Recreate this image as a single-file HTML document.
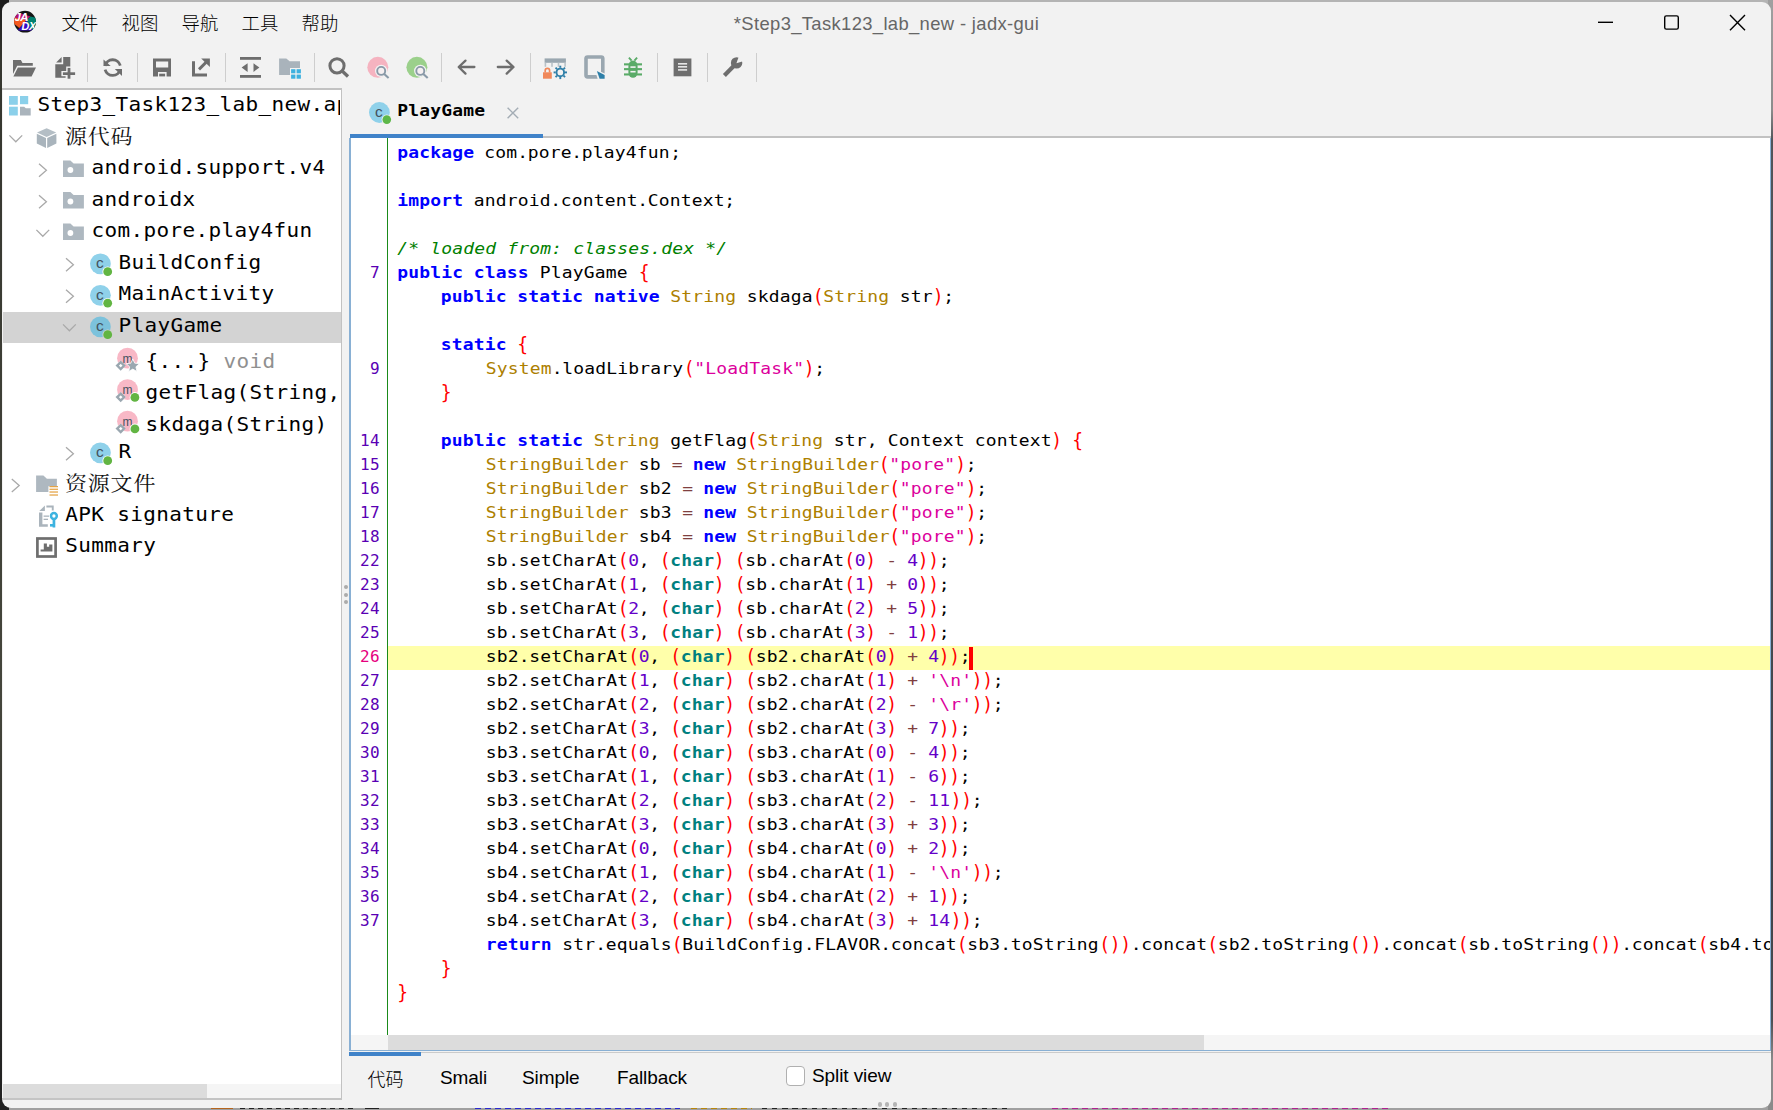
<!DOCTYPE html><html lang="zh"><head><meta charset="utf-8"><title>*Step3_Task123_lab_new - jadx-gui</title><style>
*{box-sizing:border-box;margin:0;padding:0}
html,body{width:1773px;height:1110px;overflow:hidden}
body{position:relative;background:#b9b9b9;font-family:"Liberation Sans","Noto Sans CJK SC",sans-serif;color:#000}
.abs{position:absolute}
#desk-l{left:0;top:0;width:3px;height:1110px;background:linear-gradient(#1d1d1d 0,#35362f 60px,#3b3c34 300px,#45463c 700px,#2a2a28 1000px,#202020 100%)}
#desk-t{left:0;top:0;width:1773px;height:4px;background:#b4b4b4}
#desk-b{left:0;top:1100px;width:1773px;height:10px;background:#a0a0a0}
.frag{top:1108px;height:1.3px}
#desk-r{left:1768px;top:0;width:5px;height:1110px;background:linear-gradient(#a0a0a0 0,#8c8c8c 110px,#50555a 140px,#3e4349 900px,#4a4f54 1020px,#8a8a8a 1060px,#8a8a8a 100%)}
#win{left:2px;top:2px;width:1769px;height:1105.9px;background:#f2f2f2;border-radius:9px;overflow:hidden}
.menu{top:11px;font-weight:300;font-size:18.4px;line-height:22px;height:22px;white-space:nowrap;font-family:"Noto Sans CJK SC",sans-serif;color:#000}
#title{left:0;top:12px;width:1773px;text-align:center;font-size:18.4px;letter-spacing:0.36px;line-height:24px;color:#666;white-space:nowrap}
.sep{width:1.2px;top:52.5px;height:29.5px;background:#cecece}
.mono{font-family:"DejaVu Sans Mono","Liberation Mono",monospace}
#tree{left:3px;top:89px;width:337.5px;height:1009px;background:#fff;overflow:hidden}
.trow{left:0;width:400px;height:31.5px;white-space:nowrap;font-size:21px;letter-spacing:0.357px;line-height:31.5px;transform:scaleY(0.9);transform-origin:0 22px}
.trow .cjk{display:inline-block;font-family:"Noto Serif CJK SC",serif;font-size:22px;letter-spacing:0.8px;color:#111;transform:scaleY(1.035);transform-origin:0 23px}
#code{left:351px;top:138px;width:1419px;height:897px;background:#fff;overflow:hidden}
.cl{left:46.24px;height:24px;line-height:24px;font-size:18px;letter-spacing:0.163px;white-space:pre;color:#000;transform:scaleY(0.91);transform-origin:0 18px}
.cl span{display:inline-block;white-space:pre;overflow:visible;height:24px;vertical-align:top}
.ln{left:0;width:29px;text-align:right;height:24px;line-height:24px;font-size:16px;letter-spacing:0.37px;color:#5a00b4}
.cl .s{transform:scaleY(1.2);transform-origin:50% 12.6px}
.k{color:#0000ff;font-weight:bold}
.t{color:#ad8000}
.s{color:#ff0000}
.o{color:#804040}
.n{color:#6400c8}
.q{color:#dc009c}
.d{color:#008080;font-weight:bold}
.c{color:#008000;font-style:italic}
.btab{top:1065px;font-size:19px;letter-spacing:-0.1px;line-height:26px;white-space:nowrap;color:#000}
</style></head><body>
<div id="desk-t" class="abs"></div><div id="desk-b" class="abs"></div><div id="desk-r" class="abs"></div><div id="desk-l" class="abs"></div>
<div class="abs" style="left:0;top:0;width:9px;height:9px;background:#1d1d1d"></div><div class="abs" style="left:0;top:1100px;width:9px;height:10px;background:#222"></div>
<div class="abs frag" style="left:211px;width:22px;background:repeating-linear-gradient(90deg,#b5651d 0,#b5651d 22px,transparent 22px,transparent 30px)"></div>
<div class="abs frag" style="left:240px;width:115px;background:repeating-linear-gradient(90deg,#222 0,#222 5.5px,transparent 5.5px,transparent 9px)"></div>
<div class="abs frag" style="left:365px;width:20px;background:repeating-linear-gradient(90deg,#222 0,#222 14px,transparent 14px,transparent 20px)"></div>
<div class="abs frag" style="left:475px;width:205px;background:repeating-linear-gradient(90deg,#2a2ad0 0,#2a2ad0 6px,transparent 6px,transparent 10px)"></div>
<div class="abs frag" style="left:691px;width:61px;background:repeating-linear-gradient(90deg,#b8860b 0,#b8860b 6px,transparent 6px,transparent 10px)"></div>
<div class="abs frag" style="left:762px;width:248px;background:repeating-linear-gradient(90deg,#222 0,#222 5.5px,transparent 5.5px,transparent 10px)"></div>
<div class="abs frag" style="left:1052px;width:338px;background:repeating-linear-gradient(90deg,#b0208f 0,#b0208f 6px,transparent 6px,transparent 10px)"></div>
<div id="win" class="abs"></div>
<svg class="abs" style="left:12px;top:9px" width="26" height="26" viewBox="12 9 26 26">
<defs><clipPath id="lc"><circle cx="25" cy="21.7" r="10.9"/></clipPath></defs>
<g clip-path="url(#lc)"><rect x="12" y="9" width="26" height="26" fill="#151515"/>
<polygon points="16.5,12 30.4,16.6 26.5,20.2 13,19.4" fill="#b5126f"/>
<polygon points="13,23 13,17.2 26.5,20.2 19.4,28" fill="#f4581f"/>
<polygon points="26.5,20.2 33,30.6 17.5,30.6" fill="#3408c8"/>
<polygon points="30.4,16.6 37,18 37,29 31.6,29.4 26.5,20.2" fill="#00816e"/>
<text x="14.4" y="21.4" font-family="Liberation Sans,sans-serif" font-weight="bold" font-style="italic" font-size="11.3" letter-spacing="-0.3" fill="#fff">JA</text>
<text x="21.4" y="29.8" font-family="Liberation Sans,sans-serif" font-weight="bold" font-style="italic" font-size="10.8" letter-spacing="-0.3" fill="#fff">DX</text>
</g></svg>
<div class="abs menu" style="left:61.5px">文件</div>
<div class="abs menu" style="left:121.5px">视图</div>
<div class="abs menu" style="left:181.5px">导航</div>
<div class="abs menu" style="left:241.5px">工具</div>
<div class="abs menu" style="left:301.5px">帮助</div>
<div id="title" class="abs">*Step3_Task123_lab_new - jadx-gui</div>
<svg class="abs" style="left:0;top:0" width="1773" height="90" viewBox="0 0 1773 90"><polygon points="13,59.9 20.9,59.9 22.5,63 32.8,63 32.8,65.8 17.2,65.8 13,74" fill="#6e6e6e"/><polygon points="17.9,67.5 36,67.5 31.6,76.4 13.4,76.4" fill="#6e6e6e"/><polygon points="56.1,62.4 61.6,57 61.6,62.4" fill="#6e6e6e"/><polygon points="63.2,57 70.3,57 70.3,66.6 66.2,66.6 66.2,71 61.4,71 61.4,76.2 65.6,76.2 65.6,77.8 55.3,77.8 55.3,64.3 63.2,64.3" fill="#6e6e6e"/><rect x="62.9" y="72.3" width="12.2" height="2.7" fill="#6e6e6e"/><rect x="67.6" y="67.9" width="2.8" height="10.8" fill="#6e6e6e"/><path d="M105.1,66 A7.8,7.8 0 0 1 120.3,65.6" fill="none" stroke="#6e6e6e" stroke-width="2.8"/><path d="M120.3,69.2 A7.8,7.8 0 0 1 105.1,69.6" fill="none" stroke="#6e6e6e" stroke-width="2.8"/><polygon points="103.5,59.6 110.7,66 103.5,66" fill="#6e6e6e"/><polygon points="122,69.1 122,75.9 114.8,69.1" fill="#6e6e6e"/><path fill-rule="evenodd" fill="#6e6e6e" d="M153,58.4h18v18h-18z M156,61.6v5.9h12.2v-5.9z M158,71.9v4.5h8.6v-4.5z"/><rect x="159.2" y="73.7" width="5.9" height="2.7" fill="#6e6e6e"/><path d="M193.5,61.2V75.1H207" fill="none" stroke="#6e6e6e" stroke-width="3"/><path d="M199,69.4L206.5,61.9" fill="none" stroke="#6e6e6e" stroke-width="2.9"/><polygon points="201.2,58.4 209.9,58.4 209.9,67" fill="#6e6e6e"/><rect x="240" y="57" width="21" height="2.8" fill="#6e6e6e"/><rect x="240" y="75" width="21" height="2.8" fill="#6e6e6e"/><polygon points="241.6,67.5 247.6,63.3 247.6,71.9" fill="#6e6e6e"/><polygon points="259.4,67.5 253.5,63.3 253.5,71.9" fill="#6e6e6e"/><polygon points="279.1,58.4 286.3,58.4 289.6,61.3 300,61.3 300,68 290,68 290,75 279.1,75" fill="#a9b3bb"/><rect x="291.1" y="69.2" width="4.3" height="4.1" fill="#3eb1df"/><rect x="296.6" y="69.2" width="4.3" height="4.1" fill="#3eb1df"/><rect x="291.1" y="74.6" width="4.3" height="4.1" fill="#3eb1df"/><rect x="296.6" y="74.6" width="4.3" height="4.1" fill="#3eb1df"/><circle cx="337" cy="65.8" r="7.1" fill="none" stroke="#6e6e6e" stroke-width="3"/><path d="M342.2,71 L348,76.5" stroke="#6e6e6e" stroke-width="3.3" fill="none"/><circle cx="377.8" cy="67.3" r="10.5" fill="#f5b3c0"/><path d="M384.2,73.9 L388.8,78.2" stroke="#f2f2f2" stroke-width="4.6" fill="none"/><circle cx="381.2" cy="70.9" r="6.2" fill="#f2f2f2"/><circle cx="381.2" cy="70.9" r="4" fill="#f6f0f1" stroke="#8a9aa8" stroke-width="1.9"/><path d="M384.2,73.9 L388.59999999999997,78.0" stroke="#8a9aa8" stroke-width="2.1" fill="none"/><circle cx="416.9" cy="67.3" r="10.5" fill="#9bd08b"/><path d="M423.29999999999995,73.9 L427.9,78.2" stroke="#f2f2f2" stroke-width="4.6" fill="none"/><circle cx="420.29999999999995" cy="70.9" r="6.2" fill="#f2f2f2"/><circle cx="420.29999999999995" cy="70.9" r="4" fill="#f6f0f1" stroke="#8a9aa8" stroke-width="1.9"/><path d="M423.29999999999995,73.9 L427.69999999999993,78.0" stroke="#8a9aa8" stroke-width="2.1" fill="none"/><path d="M459.4,67H474.4M465.5,60.6L458.7,67L465.5,73.6" fill="none" stroke="#6e6e6e" stroke-width="2.3" stroke-linecap="round" stroke-linejoin="round"/><path d="M497.8,67H512.8M506.7,60.6L513.5,67L506.7,73.6" fill="none" stroke="#6e6e6e" stroke-width="2.3" stroke-linecap="round" stroke-linejoin="round"/><rect x="544.6" y="58.4" width="21.3" height="4.4" fill="#9aa7b0"/><rect x="544.6" y="62.8" width="1.6" height="4" fill="#b9c2c8"/><rect x="551.2" y="62.8" width="1.6" height="4" fill="#b9c2c8"/><rect x="557.7" y="62.8" width="1.6" height="4" fill="#b9c2c8"/><rect x="564.3" y="62.8" width="1.6" height="4" fill="#b9c2c8"/><rect x="543" y="72.3" width="8.8" height="6.4" fill="#f0885a"/><path d="M545.2,72.6V70.6a2.2,2.3 0 0 1 4.4,0V72.6" fill="none" stroke="#f0885a" stroke-width="1.7"/><circle cx="560.3" cy="72.4" r="3.8" fill="#f2f2f2" stroke="#2e7fa8" stroke-width="1.9"/><path d="M564.90,72.40L567.00,72.40" stroke="#2e7fa8" stroke-width="1.9"/><path d="M563.55,75.65L565.04,77.14" stroke="#2e7fa8" stroke-width="1.9"/><path d="M560.30,77.00L560.30,79.10" stroke="#2e7fa8" stroke-width="1.9"/><path d="M557.05,75.65L555.56,77.14" stroke="#2e7fa8" stroke-width="1.9"/><path d="M555.70,72.40L553.60,72.40" stroke="#2e7fa8" stroke-width="1.9"/><path d="M557.05,69.15L555.56,67.66" stroke="#2e7fa8" stroke-width="1.9"/><path d="M560.30,67.80L560.30,65.70" stroke="#2e7fa8" stroke-width="1.9"/><path d="M563.55,69.15L565.04,67.66" stroke="#2e7fa8" stroke-width="1.9"/><rect x="586" y="57" width="16.8" height="19.9" rx="1.6" fill="none" stroke="#9aa7b0" stroke-width="3.6"/><polygon points="594.5,69 606,74 606,80 598,80" fill="#f2f2f2"/><polygon points="596.9,70.9 604.6,75 604.6,78.7 599.6,78.7" fill="#2e7fa8"/><path d="M628.4,66 a4.6,5.6 0 0 1 9.2,0 V72.5 a4.6,5.2 0 0 1 -9.2,0z" fill="#5aab68"/><rect x="624" y="63.3" width="18" height="2.1" fill="#5aab68"/><rect x="624" y="68.1" width="18" height="2.1" fill="#5aab68"/><rect x="624" y="73.4" width="18" height="2.1" fill="#5aab68"/><path d="M628.9,57.7L631.6,60.6M637.1,57.7L634.4,60.6" stroke="#5aab68" stroke-width="1.9" fill="none"/><rect x="630.4" y="66.3" width="5.2" height="1.6" fill="#f2f2f2"/><rect x="630.4" y="70.9" width="5.2" height="1.6" fill="#f2f2f2"/><rect x="673.6" y="58.5" width="17.8" height="17.8" fill="#6e6e6e"/><rect x="678" y="63.1" width="9.1" height="1.45" fill="#f2f2f2"/><rect x="678" y="66.1" width="9.1" height="1.45" fill="#f2f2f2"/><rect x="678" y="69.2" width="9.1" height="1.45" fill="#f2f2f2"/><path d="M724.4,75.4L734.2,65.6" stroke="#6e6e6e" stroke-width="4.2" fill="none"/><circle cx="736.6" cy="62.9" r="5.7" fill="#6e6e6e"/><polygon points="736.4,63.2 739.6,54.5 745.5,60.4" fill="#f2f2f2"/><path d="M1598,22.3H1613" stroke="#000" stroke-width="1.4" fill="none"/><rect x="1664.7" y="15.9" width="13.6" height="13.2" rx="1.6" fill="none" stroke="#000" stroke-width="1.4"/><path d="M1730,15L1745,30.2M1745,15L1730,30.2" stroke="#000" stroke-width="1.4" fill="none"/></svg>
<div class="abs sep" style="left:87.10px"></div>
<div class="abs sep" style="left:136.60px"></div>
<div class="abs sep" style="left:225.10px"></div>
<div class="abs sep" style="left:313.60px"></div>
<div class="abs sep" style="left:440.90px"></div>
<div class="abs sep" style="left:529.60px"></div>
<div class="abs sep" style="left:657.10px"></div>
<div class="abs sep" style="left:706.50px"></div>
<div class="abs sep" style="left:756.00px"></div>
<div class="abs" style="left:340.2px;top:88px;width:1.8px;height:1011.5px;background:#c2c2c2"></div>
<div class="abs" style="left:2px;top:1098px;width:340px;height:1.5px;background:#c4c4c4"></div>
<div id="tree" class="abs"><div class="abs" style="left:0;top:223px;width:340px;height:30.6px;background:#d3d3d3"></div><svg class="abs" style="left:0;top:0" width="338" height="1009" viewBox="0 0 338 1009"><rect x="6" y="7" width="8.8" height="8.8" fill="#8bd0ea"/><rect x="17" y="7" width="8.2" height="8.2" fill="#8bd0ea"/><rect x="6" y="17.700000000000003" width="8.8" height="8.8" fill="#8bd0ea"/><path d="M17,17.700000000000003h4.2l1.6,1.5h4.9v7.3h-10.7z" fill="#aab4bc"/><path d="M6.4,46.4l6.4,6.4l6.4,-6.4" fill="none" stroke="#a9a9a9" stroke-width="1.3"/><path d="M43.6,39.3l9.6,4.3l-9.6,4.4l-9.6,-4.4z" fill="#b4bec5"/><path d="M33.8,44.7l9.2,4.2v10l-9.2,-4.4z" fill="#a9b4bc"/><path d="M53.400000000000006,44.7l-9.2,4.2v10l9.2,-4.4z" fill="#a9b4bc"/><path d="M36.0,74.8l7.4,6.5l-7.4,6.5" fill="none" stroke="#a9a9a9" stroke-width="1.3"/><path d="M60,71.60000000000002h7.4l3.2,2.9h10.3v13.4h-20.9z" fill="#aeb8c0"/><circle cx="67.4" cy="81.00000000000003" r="2.9" fill="#fff"/><path d="M36.0,106.3l7.4,6.5l-7.4,6.5" fill="none" stroke="#a9a9a9" stroke-width="1.3"/><path d="M60,103.10000000000002h7.4l3.2,2.9h10.3v13.4h-20.9z" fill="#aeb8c0"/><circle cx="67.4" cy="112.50000000000003" r="2.9" fill="#fff"/><path d="M33.4,140.9l6.4,6.4l6.4,-6.4" fill="none" stroke="#a9a9a9" stroke-width="1.3"/><path d="M60,134.60000000000002h7.4l3.2,2.9h10.3v13.4h-20.9z" fill="#aeb8c0"/><circle cx="67.4" cy="144.00000000000003" r="2.9" fill="#fff"/><path d="M63.0,169.3l7.4,6.5l-7.4,6.5" fill="none" stroke="#a9a9a9" stroke-width="1.3"/><circle cx="97.4" cy="174.8" r="10.4" fill="#8fd1ea"/><text x="96.80000000000001" y="179.10000000000002" text-anchor="middle" font-family="Liberation Sans,sans-serif" font-size="15.5" fill="#45525e">c</text><circle cx="104.7" cy="182.70000000000002" r="5.3" fill="#fff"/><circle cx="104.7" cy="182.70000000000002" r="4.4" fill="#62b543"/><path d="M63.0,200.8l7.4,6.5l-7.4,6.5" fill="none" stroke="#a9a9a9" stroke-width="1.3"/><circle cx="97.4" cy="206.3" r="10.4" fill="#8fd1ea"/><text x="96.80000000000001" y="210.60000000000002" text-anchor="middle" font-family="Liberation Sans,sans-serif" font-size="15.5" fill="#45525e">c</text><circle cx="104.7" cy="214.20000000000002" r="5.3" fill="#fff"/><circle cx="104.7" cy="214.20000000000002" r="4.4" fill="#62b543"/><path d="M60.0,235.4l6.4,6.4l6.4,-6.4" fill="none" stroke="#a9a9a9" stroke-width="1.3"/><circle cx="97.4" cy="237.8" r="10.4" fill="#7cc2dc"/><text x="96.80000000000001" y="242.10000000000002" text-anchor="middle" font-family="Liberation Sans,sans-serif" font-size="15.5" fill="#45525e">c</text><circle cx="104.7" cy="245.70000000000002" r="5.3" fill="#d3d3d3"/><circle cx="104.7" cy="245.70000000000002" r="4.4" fill="#62b543"/><circle cx="124.5" cy="269.2" r="10.4" fill="#f8b8c6"/><text x="124.5" y="273.8" text-anchor="middle" font-family="Liberation Sans,sans-serif" font-size="12" fill="#45525e">m</text><path d="M112.5,276.59999999999997l5.2,-5.2l5.2,5.2l-5.2,5.2z" fill="#fff"/><path d="M114.2,276.59999999999997l3.5,-3.5l3.5,3.5l-3.5,3.5z" fill="#fff" stroke="#9aa7b0" stroke-width="2.4"/><polygon points="129.80,269.90 131.74,274.13 136.36,274.67 132.94,277.82 133.86,282.38 129.80,280.10 125.74,282.38 126.66,277.82 123.24,274.67 127.86,274.13" fill="#9aa7b0" stroke="#fff" stroke-width="0.8"/><circle cx="124.5" cy="300.7" r="10.4" fill="#f8b8c6"/><text x="124.5" y="305.3" text-anchor="middle" font-family="Liberation Sans,sans-serif" font-size="12" fill="#45525e">m</text><path d="M112.5,308.09999999999997l5.2,-5.2l5.2,5.2l-5.2,5.2z" fill="#fff"/><path d="M114.2,308.09999999999997l3.5,-3.5l3.5,3.5l-3.5,3.5z" fill="#fff" stroke="#9aa7b0" stroke-width="2.4"/><circle cx="131.9" cy="308.4" r="5.3" fill="#fff"/><circle cx="131.9" cy="308.4" r="4.4" fill="#62b543"/><circle cx="124.5" cy="332.2" r="10.4" fill="#f8b8c6"/><text x="124.5" y="336.8" text-anchor="middle" font-family="Liberation Sans,sans-serif" font-size="12" fill="#45525e">m</text><path d="M112.5,339.59999999999997l5.2,-5.2l5.2,5.2l-5.2,5.2z" fill="#fff"/><path d="M114.2,339.59999999999997l3.5,-3.5l3.5,3.5l-3.5,3.5z" fill="#fff" stroke="#9aa7b0" stroke-width="2.4"/><circle cx="131.9" cy="339.9" r="5.3" fill="#fff"/><circle cx="131.9" cy="339.9" r="4.4" fill="#62b543"/><path d="M63.0,358.3l7.4,6.5l-7.4,6.5" fill="none" stroke="#a9a9a9" stroke-width="1.3"/><circle cx="97.4" cy="363.8" r="10.4" fill="#8fd1ea"/><text x="96.80000000000001" y="368.1" text-anchor="middle" font-family="Liberation Sans,sans-serif" font-size="15.5" fill="#45525e">c</text><circle cx="104.7" cy="371.7" r="5.3" fill="#fff"/><circle cx="104.7" cy="371.7" r="4.4" fill="#62b543"/><path d="M8.8,390.1l7.4,6.5l-7.4,6.5" fill="none" stroke="#a9a9a9" stroke-width="1.3"/><path d="M33.1,386.6h7.3l3.5,3.1h10v7.5h-8.5v5.7h-12.3z" fill="#aeb8c0"/><rect x="46.5" y="397" width="8.5" height="1.25" fill="#e4a345"/><rect x="46.5" y="399.65" width="8.5" height="1.25" fill="#e4a345"/><rect x="46.5" y="402.4" width="8.5" height="1.25" fill="#e4a345"/><rect x="46.5" y="405.4" width="8.5" height="1.25" fill="#e4a345"/><polygon points="36.3,422 41.9,416.6 41.9,422" fill="#aab4bc"/><path d="M43.4,416.6h7.3v5h-1.9v-3.1h-5.4z" fill="#aab4bc"/><path d="M36,423.6h3.4v11.6h5.4v2.6h-8.8z" fill="#aab4bc"/><rect x="40.6" y="426.5" width="5.4" height="1.3" fill="#aab4bc"/><rect x="40.6" y="429.70000000000005" width="4.4" height="1.3" fill="#aab4bc"/><circle cx="50.9" cy="427" r="2.9" fill="#fff" stroke="#3db3e0" stroke-width="2.5"/><rect x="49.6" y="430.5" width="2.7" height="8" fill="#3db3e0"/><rect x="47" y="435" width="3" height="2.6" fill="#3db3e0"/><rect x="34.4" y="449.5" width="18.2" height="18" fill="none" stroke="#6e6e6e" stroke-width="2.7"/><path d="M37.6,460.4h3.2v-5.9h3.1v3.2h2.3v-2.3h3.2v7.2h-11.8z" fill="#6e6e6e"/></svg><div class="abs trow mono" style="left:34.6px;top:0.00px;width:302.7px;overflow:hidden;">Step3_Task123_lab_new.apk</div><div class="abs trow mono" style="left:62.0px;top:30.00px;"><span class="cjk">源代码</span></div><div class="abs trow mono" style="left:88.6px;top:63.00px;">android.support.v4</div><div class="abs trow mono" style="left:88.6px;top:95.00px;">androidx</div><div class="abs trow mono" style="left:88.6px;top:126.00px;">com.pore.play4fun</div><div class="abs trow mono" style="left:115.6px;top:158.00px;">BuildConfig</div><div class="abs trow mono" style="left:115.6px;top:189.00px;">MainActivity</div><div class="abs trow mono" style="left:115.6px;top:221.00px;">PlayGame</div><div class="abs trow mono" style="left:142.6px;top:257.00px;">{...} <span style="color:#909090">void</span></div><div class="abs trow mono" style="left:142.6px;top:288.00px;width:194px;overflow:hidden;">getFlag(String, Context)</div><div class="abs trow mono" style="left:142.6px;top:320.00px;">skdaga(String)</div><div class="abs trow mono" style="left:115.6px;top:347.00px;">R</div><div class="abs trow mono" style="left:62.0px;top:377.00px;"><span class="cjk">资源文件</span></div><div class="abs trow mono" style="left:62.2px;top:410.00px;">APK signature</div><div class="abs trow mono" style="left:62.2px;top:441.00px;">Summary</div><div class="abs" style="left:0;top:995px;width:338px;height:15px;background:#f5f5f5"></div><div class="abs" style="left:0;top:995px;width:204px;height:15px;background:#dcdcdc"></div></div>
<div class="abs" style="left:2px;top:88px;width:340px;height:1.7px;background:#c2c2c2"></div>
<div class="abs" style="left:343.5px;top:584.9px;width:4.4px;height:4.4px;border-radius:3px;background:#ababab"></div>
<div class="abs" style="left:343.5px;top:592.5px;width:4.4px;height:4.4px;border-radius:3px;background:#ababab"></div>
<div class="abs" style="left:343.5px;top:599.9px;width:4.4px;height:4.4px;border-radius:3px;background:#ababab"></div>
<svg class="abs" style="left:360px;top:98px" width="170" height="32" viewBox="360 98 170 32">
<circle cx="379.4" cy="112.5" r="10.4" fill="#8fd1ea"/>
<text x="378.8" y="116.8" text-anchor="middle" font-family="Liberation Sans,sans-serif" font-size="15.5" fill="#45525e">c</text>
<circle cx="386.8" cy="119.6" r="5.2" fill="#f2f2f2"/><circle cx="386.8" cy="119.6" r="4.3" fill="#5db849"/>
<path d="M507.6,107.7L518.2,118.2M518.2,107.7L507.6,118.2" stroke="#a4adb5" stroke-width="1.4" fill="none"/></svg>
<div class="abs mono" style="left:397.3px;top:98px;font-size:18px;font-weight:bold;line-height:24px;letter-spacing:0.163px;white-space:nowrap;transform:scaleY(0.91);transform-origin:0 18px">PlayGame</div>
<div class="abs" style="left:349.6px;top:136px;width:1421px;height:1.6px;background:#c2c2c2"></div>
<div class="abs" style="left:349.6px;top:133.8px;width:193.2px;height:4.2px;background:#4083c9"></div>
<div class="abs" style="left:349px;top:138px;width:1.7px;height:913px;background:#89b0d4"></div>
<div id="code" class="abs"><div class="abs" style="left:36px;top:0;width:1.2px;height:897px;background:#1a8a1a"></div><div class="abs cl mono" style="top:2px"><span class="k" style="width:76.5px">package</span><span style="width:10.5px"> </span><span style="width:33px">com</span><span style="width:10.5px">.</span><span style="width:43.5px">pore</span><span style="width:10.5px">.</span><span style="width:88.5px">play4fun</span><span style="width:10.5px">;</span></div><div class="abs cl mono" style="top:50px"><span class="k" style="width:66px">import</span><span style="width:10.5px"> </span><span style="width:76.5px">android</span><span style="width:10.5px">.</span><span style="width:76.5px">content</span><span style="width:10.5px">.</span><span style="width:76.5px">Context</span><span style="width:10.5px">;</span></div><div class="abs cl mono" style="top:98px"><span class="c" style="width:330px">/* loaded from: classes.dex */</span></div><div class="abs ln mono" style="top:123px;color:#5a00b4">7</div><div class="abs cl mono" style="top:122px"><span class="k" style="width:66px">public</span><span style="width:10.5px"> </span><span class="k" style="width:55.5px">class</span><span style="width:10.5px"> </span><span style="width:88.5px">PlayGame</span><span style="width:10.5px"> </span><span class="s" style="width:10.5px">{</span></div><div class="abs cl mono" style="top:146px"><span style="width:43.5px">    </span><span class="k" style="width:66px">public</span><span style="width:10.5px"> </span><span class="k" style="width:66px">static</span><span style="width:10.5px"> </span><span class="k" style="width:66px">native</span><span style="width:10.5px"> </span><span class="t" style="width:66px">String</span><span style="width:10.5px"> </span><span style="width:66px">skdaga</span><span class="s" style="width:10.5px">(</span><span class="t" style="width:66px">String</span><span style="width:10.5px"> </span><span style="width:33px">str</span><span class="s" style="width:10.5px">)</span><span style="width:10.5px">;</span></div><div class="abs cl mono" style="top:194px"><span style="width:43.5px">    </span><span class="k" style="width:66px">static</span><span style="width:10.5px"> </span><span class="s" style="width:10.5px">{</span></div><div class="abs ln mono" style="top:219px;color:#5a00b4">9</div><div class="abs cl mono" style="top:218px"><span style="width:88.5px">        </span><span class="t" style="width:66px">System</span><span style="width:10.5px">.</span><span style="width:121.5px">loadLibrary</span><span class="s" style="width:10.5px">(</span><span class="q" style="width:109.5px">&quot;LoadTask&quot;</span><span class="s" style="width:10.5px">)</span><span style="width:10.5px">;</span></div><div class="abs cl mono" style="top:242px"><span style="width:43.5px">    </span><span class="s" style="width:10.5px">}</span></div><div class="abs ln mono" style="top:291px;color:#5a00b4">14</div><div class="abs cl mono" style="top:290px"><span style="width:43.5px">    </span><span class="k" style="width:66px">public</span><span style="width:10.5px"> </span><span class="k" style="width:66px">static</span><span style="width:10.5px"> </span><span class="t" style="width:66px">String</span><span style="width:10.5px"> </span><span style="width:76.5px">getFlag</span><span class="s" style="width:10.5px">(</span><span class="t" style="width:66px">String</span><span style="width:10.5px"> </span><span style="width:33px">str</span><span style="width:10.5px">,</span><span style="width:10.5px"> </span><span style="width:76.5px">Context</span><span style="width:10.5px"> </span><span style="width:76.5px">context</span><span class="s" style="width:10.5px">)</span><span style="width:10.5px"> </span><span class="s" style="width:10.5px">{</span></div><div class="abs ln mono" style="top:315px;color:#5a00b4">15</div><div class="abs cl mono" style="top:314px"><span style="width:88.5px">        </span><span class="t" style="width:142.5px">StringBuilder</span><span style="width:10.5px"> </span><span style="width:22.5px">sb</span><span style="width:10.5px"> </span><span class="o" style="width:10.5px">=</span><span style="width:10.5px"> </span><span class="k" style="width:33px">new</span><span style="width:10.5px"> </span><span class="t" style="width:142.5px">StringBuilder</span><span class="s" style="width:10.5px">(</span><span class="q" style="width:66px">&quot;pore&quot;</span><span class="s" style="width:10.5px">)</span><span style="width:10.5px">;</span></div><div class="abs ln mono" style="top:339px;color:#5a00b4">16</div><div class="abs cl mono" style="top:338px"><span style="width:88.5px">        </span><span class="t" style="width:142.5px">StringBuilder</span><span style="width:10.5px"> </span><span style="width:33px">sb2</span><span style="width:10.5px"> </span><span class="o" style="width:10.5px">=</span><span style="width:10.5px"> </span><span class="k" style="width:33px">new</span><span style="width:10.5px"> </span><span class="t" style="width:142.5px">StringBuilder</span><span class="s" style="width:10.5px">(</span><span class="q" style="width:66px">&quot;pore&quot;</span><span class="s" style="width:10.5px">)</span><span style="width:10.5px">;</span></div><div class="abs ln mono" style="top:363px;color:#5a00b4">17</div><div class="abs cl mono" style="top:362px"><span style="width:88.5px">        </span><span class="t" style="width:142.5px">StringBuilder</span><span style="width:10.5px"> </span><span style="width:33px">sb3</span><span style="width:10.5px"> </span><span class="o" style="width:10.5px">=</span><span style="width:10.5px"> </span><span class="k" style="width:33px">new</span><span style="width:10.5px"> </span><span class="t" style="width:142.5px">StringBuilder</span><span class="s" style="width:10.5px">(</span><span class="q" style="width:66px">&quot;pore&quot;</span><span class="s" style="width:10.5px">)</span><span style="width:10.5px">;</span></div><div class="abs ln mono" style="top:387px;color:#5a00b4">18</div><div class="abs cl mono" style="top:386px"><span style="width:88.5px">        </span><span class="t" style="width:142.5px">StringBuilder</span><span style="width:10.5px"> </span><span style="width:33px">sb4</span><span style="width:10.5px"> </span><span class="o" style="width:10.5px">=</span><span style="width:10.5px"> </span><span class="k" style="width:33px">new</span><span style="width:10.5px"> </span><span class="t" style="width:142.5px">StringBuilder</span><span class="s" style="width:10.5px">(</span><span class="q" style="width:66px">&quot;pore&quot;</span><span class="s" style="width:10.5px">)</span><span style="width:10.5px">;</span></div><div class="abs ln mono" style="top:411px;color:#5a00b4">22</div><div class="abs cl mono" style="top:410px"><span style="width:88.5px">        </span><span style="width:22.5px">sb</span><span style="width:10.5px">.</span><span style="width:99px">setCharAt</span><span class="s" style="width:10.5px">(</span><span class="n" style="width:10.5px">0</span><span style="width:10.5px">,</span><span style="width:10.5px"> </span><span class="s" style="width:10.5px">(</span><span class="d" style="width:43.5px">char</span><span class="s" style="width:10.5px">)</span><span style="width:10.5px"> </span><span class="s" style="width:10.5px">(</span><span style="width:22.5px">sb</span><span style="width:10.5px">.</span><span style="width:66px">charAt</span><span class="s" style="width:10.5px">(</span><span class="n" style="width:10.5px">0</span><span class="s" style="width:10.5px">)</span><span style="width:10.5px"> </span><span class="o" style="width:10.5px">-</span><span style="width:10.5px"> </span><span class="n" style="width:10.5px">4</span><span class="s" style="width:10.5px">)</span><span class="s" style="width:10.5px">)</span><span style="width:10.5px">;</span></div><div class="abs ln mono" style="top:435px;color:#5a00b4">23</div><div class="abs cl mono" style="top:434px"><span style="width:88.5px">        </span><span style="width:22.5px">sb</span><span style="width:10.5px">.</span><span style="width:99px">setCharAt</span><span class="s" style="width:10.5px">(</span><span class="n" style="width:10.5px">1</span><span style="width:10.5px">,</span><span style="width:10.5px"> </span><span class="s" style="width:10.5px">(</span><span class="d" style="width:43.5px">char</span><span class="s" style="width:10.5px">)</span><span style="width:10.5px"> </span><span class="s" style="width:10.5px">(</span><span style="width:22.5px">sb</span><span style="width:10.5px">.</span><span style="width:66px">charAt</span><span class="s" style="width:10.5px">(</span><span class="n" style="width:10.5px">1</span><span class="s" style="width:10.5px">)</span><span style="width:10.5px"> </span><span class="o" style="width:10.5px">+</span><span style="width:10.5px"> </span><span class="n" style="width:10.5px">0</span><span class="s" style="width:10.5px">)</span><span class="s" style="width:10.5px">)</span><span style="width:10.5px">;</span></div><div class="abs ln mono" style="top:459px;color:#5a00b4">24</div><div class="abs cl mono" style="top:458px"><span style="width:88.5px">        </span><span style="width:22.5px">sb</span><span style="width:10.5px">.</span><span style="width:99px">setCharAt</span><span class="s" style="width:10.5px">(</span><span class="n" style="width:10.5px">2</span><span style="width:10.5px">,</span><span style="width:10.5px"> </span><span class="s" style="width:10.5px">(</span><span class="d" style="width:43.5px">char</span><span class="s" style="width:10.5px">)</span><span style="width:10.5px"> </span><span class="s" style="width:10.5px">(</span><span style="width:22.5px">sb</span><span style="width:10.5px">.</span><span style="width:66px">charAt</span><span class="s" style="width:10.5px">(</span><span class="n" style="width:10.5px">2</span><span class="s" style="width:10.5px">)</span><span style="width:10.5px"> </span><span class="o" style="width:10.5px">+</span><span style="width:10.5px"> </span><span class="n" style="width:10.5px">5</span><span class="s" style="width:10.5px">)</span><span class="s" style="width:10.5px">)</span><span style="width:10.5px">;</span></div><div class="abs ln mono" style="top:483px;color:#5a00b4">25</div><div class="abs cl mono" style="top:482px"><span style="width:88.5px">        </span><span style="width:22.5px">sb</span><span style="width:10.5px">.</span><span style="width:99px">setCharAt</span><span class="s" style="width:10.5px">(</span><span class="n" style="width:10.5px">3</span><span style="width:10.5px">,</span><span style="width:10.5px"> </span><span class="s" style="width:10.5px">(</span><span class="d" style="width:43.5px">char</span><span class="s" style="width:10.5px">)</span><span style="width:10.5px"> </span><span class="s" style="width:10.5px">(</span><span style="width:22.5px">sb</span><span style="width:10.5px">.</span><span style="width:66px">charAt</span><span class="s" style="width:10.5px">(</span><span class="n" style="width:10.5px">3</span><span class="s" style="width:10.5px">)</span><span style="width:10.5px"> </span><span class="o" style="width:10.5px">-</span><span style="width:10.5px"> </span><span class="n" style="width:10.5px">1</span><span class="s" style="width:10.5px">)</span><span class="s" style="width:10.5px">)</span><span style="width:10.5px">;</span></div><div class="abs" style="left:37.2px;top:508.00px;width:1400px;height:24px;background:#ffffaa"></div><div class="abs ln mono" style="top:507px;color:#e6007e">26</div><div class="abs cl mono" style="top:506px"><span style="width:88.5px">        </span><span style="width:33px">sb2</span><span style="width:10.5px">.</span><span style="width:99px">setCharAt</span><span class="s" style="width:10.5px">(</span><span class="n" style="width:10.5px">0</span><span style="width:10.5px">,</span><span style="width:10.5px"> </span><span class="s" style="width:10.5px">(</span><span class="d" style="width:43.5px">char</span><span class="s" style="width:10.5px">)</span><span style="width:10.5px"> </span><span class="s" style="width:10.5px">(</span><span style="width:33px">sb2</span><span style="width:10.5px">.</span><span style="width:66px">charAt</span><span class="s" style="width:10.5px">(</span><span class="n" style="width:10.5px">0</span><span class="s" style="width:10.5px">)</span><span style="width:10.5px"> </span><span class="o" style="width:10.5px">+</span><span style="width:10.5px"> </span><span class="n" style="width:10.5px">4</span><span class="s" style="width:10.5px">)</span><span class="s" style="width:10.5px">)</span><span style="width:10.5px">;</span></div><div class="abs" style="left:618px;top:509.00px;width:4px;height:23px;background:#ff0000"></div><div class="abs ln mono" style="top:531px;color:#5a00b4">27</div><div class="abs cl mono" style="top:530px"><span style="width:88.5px">        </span><span style="width:33px">sb2</span><span style="width:10.5px">.</span><span style="width:99px">setCharAt</span><span class="s" style="width:10.5px">(</span><span class="n" style="width:10.5px">1</span><span style="width:10.5px">,</span><span style="width:10.5px"> </span><span class="s" style="width:10.5px">(</span><span class="d" style="width:43.5px">char</span><span class="s" style="width:10.5px">)</span><span style="width:10.5px"> </span><span class="s" style="width:10.5px">(</span><span style="width:33px">sb2</span><span style="width:10.5px">.</span><span style="width:66px">charAt</span><span class="s" style="width:10.5px">(</span><span class="n" style="width:10.5px">1</span><span class="s" style="width:10.5px">)</span><span style="width:10.5px"> </span><span class="o" style="width:10.5px">+</span><span style="width:10.5px"> </span><span class="q" style="width:43.5px">&#x27;\n&#x27;</span><span class="s" style="width:10.5px">)</span><span class="s" style="width:10.5px">)</span><span style="width:10.5px">;</span></div><div class="abs ln mono" style="top:555px;color:#5a00b4">28</div><div class="abs cl mono" style="top:554px"><span style="width:88.5px">        </span><span style="width:33px">sb2</span><span style="width:10.5px">.</span><span style="width:99px">setCharAt</span><span class="s" style="width:10.5px">(</span><span class="n" style="width:10.5px">2</span><span style="width:10.5px">,</span><span style="width:10.5px"> </span><span class="s" style="width:10.5px">(</span><span class="d" style="width:43.5px">char</span><span class="s" style="width:10.5px">)</span><span style="width:10.5px"> </span><span class="s" style="width:10.5px">(</span><span style="width:33px">sb2</span><span style="width:10.5px">.</span><span style="width:66px">charAt</span><span class="s" style="width:10.5px">(</span><span class="n" style="width:10.5px">2</span><span class="s" style="width:10.5px">)</span><span style="width:10.5px"> </span><span class="o" style="width:10.5px">-</span><span style="width:10.5px"> </span><span class="q" style="width:43.5px">&#x27;\r&#x27;</span><span class="s" style="width:10.5px">)</span><span class="s" style="width:10.5px">)</span><span style="width:10.5px">;</span></div><div class="abs ln mono" style="top:579px;color:#5a00b4">29</div><div class="abs cl mono" style="top:578px"><span style="width:88.5px">        </span><span style="width:33px">sb2</span><span style="width:10.5px">.</span><span style="width:99px">setCharAt</span><span class="s" style="width:10.5px">(</span><span class="n" style="width:10.5px">3</span><span style="width:10.5px">,</span><span style="width:10.5px"> </span><span class="s" style="width:10.5px">(</span><span class="d" style="width:43.5px">char</span><span class="s" style="width:10.5px">)</span><span style="width:10.5px"> </span><span class="s" style="width:10.5px">(</span><span style="width:33px">sb2</span><span style="width:10.5px">.</span><span style="width:66px">charAt</span><span class="s" style="width:10.5px">(</span><span class="n" style="width:10.5px">3</span><span class="s" style="width:10.5px">)</span><span style="width:10.5px"> </span><span class="o" style="width:10.5px">+</span><span style="width:10.5px"> </span><span class="n" style="width:10.5px">7</span><span class="s" style="width:10.5px">)</span><span class="s" style="width:10.5px">)</span><span style="width:10.5px">;</span></div><div class="abs ln mono" style="top:603px;color:#5a00b4">30</div><div class="abs cl mono" style="top:602px"><span style="width:88.5px">        </span><span style="width:33px">sb3</span><span style="width:10.5px">.</span><span style="width:99px">setCharAt</span><span class="s" style="width:10.5px">(</span><span class="n" style="width:10.5px">0</span><span style="width:10.5px">,</span><span style="width:10.5px"> </span><span class="s" style="width:10.5px">(</span><span class="d" style="width:43.5px">char</span><span class="s" style="width:10.5px">)</span><span style="width:10.5px"> </span><span class="s" style="width:10.5px">(</span><span style="width:33px">sb3</span><span style="width:10.5px">.</span><span style="width:66px">charAt</span><span class="s" style="width:10.5px">(</span><span class="n" style="width:10.5px">0</span><span class="s" style="width:10.5px">)</span><span style="width:10.5px"> </span><span class="o" style="width:10.5px">-</span><span style="width:10.5px"> </span><span class="n" style="width:10.5px">4</span><span class="s" style="width:10.5px">)</span><span class="s" style="width:10.5px">)</span><span style="width:10.5px">;</span></div><div class="abs ln mono" style="top:627px;color:#5a00b4">31</div><div class="abs cl mono" style="top:626px"><span style="width:88.5px">        </span><span style="width:33px">sb3</span><span style="width:10.5px">.</span><span style="width:99px">setCharAt</span><span class="s" style="width:10.5px">(</span><span class="n" style="width:10.5px">1</span><span style="width:10.5px">,</span><span style="width:10.5px"> </span><span class="s" style="width:10.5px">(</span><span class="d" style="width:43.5px">char</span><span class="s" style="width:10.5px">)</span><span style="width:10.5px"> </span><span class="s" style="width:10.5px">(</span><span style="width:33px">sb3</span><span style="width:10.5px">.</span><span style="width:66px">charAt</span><span class="s" style="width:10.5px">(</span><span class="n" style="width:10.5px">1</span><span class="s" style="width:10.5px">)</span><span style="width:10.5px"> </span><span class="o" style="width:10.5px">-</span><span style="width:10.5px"> </span><span class="n" style="width:10.5px">6</span><span class="s" style="width:10.5px">)</span><span class="s" style="width:10.5px">)</span><span style="width:10.5px">;</span></div><div class="abs ln mono" style="top:651px;color:#5a00b4">32</div><div class="abs cl mono" style="top:650px"><span style="width:88.5px">        </span><span style="width:33px">sb3</span><span style="width:10.5px">.</span><span style="width:99px">setCharAt</span><span class="s" style="width:10.5px">(</span><span class="n" style="width:10.5px">2</span><span style="width:10.5px">,</span><span style="width:10.5px"> </span><span class="s" style="width:10.5px">(</span><span class="d" style="width:43.5px">char</span><span class="s" style="width:10.5px">)</span><span style="width:10.5px"> </span><span class="s" style="width:10.5px">(</span><span style="width:33px">sb3</span><span style="width:10.5px">.</span><span style="width:66px">charAt</span><span class="s" style="width:10.5px">(</span><span class="n" style="width:10.5px">2</span><span class="s" style="width:10.5px">)</span><span style="width:10.5px"> </span><span class="o" style="width:10.5px">-</span><span style="width:10.5px"> </span><span class="n" style="width:22.5px">11</span><span class="s" style="width:10.5px">)</span><span class="s" style="width:10.5px">)</span><span style="width:10.5px">;</span></div><div class="abs ln mono" style="top:675px;color:#5a00b4">33</div><div class="abs cl mono" style="top:674px"><span style="width:88.5px">        </span><span style="width:33px">sb3</span><span style="width:10.5px">.</span><span style="width:99px">setCharAt</span><span class="s" style="width:10.5px">(</span><span class="n" style="width:10.5px">3</span><span style="width:10.5px">,</span><span style="width:10.5px"> </span><span class="s" style="width:10.5px">(</span><span class="d" style="width:43.5px">char</span><span class="s" style="width:10.5px">)</span><span style="width:10.5px"> </span><span class="s" style="width:10.5px">(</span><span style="width:33px">sb3</span><span style="width:10.5px">.</span><span style="width:66px">charAt</span><span class="s" style="width:10.5px">(</span><span class="n" style="width:10.5px">3</span><span class="s" style="width:10.5px">)</span><span style="width:10.5px"> </span><span class="o" style="width:10.5px">+</span><span style="width:10.5px"> </span><span class="n" style="width:10.5px">3</span><span class="s" style="width:10.5px">)</span><span class="s" style="width:10.5px">)</span><span style="width:10.5px">;</span></div><div class="abs ln mono" style="top:699px;color:#5a00b4">34</div><div class="abs cl mono" style="top:698px"><span style="width:88.5px">        </span><span style="width:33px">sb4</span><span style="width:10.5px">.</span><span style="width:99px">setCharAt</span><span class="s" style="width:10.5px">(</span><span class="n" style="width:10.5px">0</span><span style="width:10.5px">,</span><span style="width:10.5px"> </span><span class="s" style="width:10.5px">(</span><span class="d" style="width:43.5px">char</span><span class="s" style="width:10.5px">)</span><span style="width:10.5px"> </span><span class="s" style="width:10.5px">(</span><span style="width:33px">sb4</span><span style="width:10.5px">.</span><span style="width:66px">charAt</span><span class="s" style="width:10.5px">(</span><span class="n" style="width:10.5px">0</span><span class="s" style="width:10.5px">)</span><span style="width:10.5px"> </span><span class="o" style="width:10.5px">+</span><span style="width:10.5px"> </span><span class="n" style="width:10.5px">2</span><span class="s" style="width:10.5px">)</span><span class="s" style="width:10.5px">)</span><span style="width:10.5px">;</span></div><div class="abs ln mono" style="top:723px;color:#5a00b4">35</div><div class="abs cl mono" style="top:722px"><span style="width:88.5px">        </span><span style="width:33px">sb4</span><span style="width:10.5px">.</span><span style="width:99px">setCharAt</span><span class="s" style="width:10.5px">(</span><span class="n" style="width:10.5px">1</span><span style="width:10.5px">,</span><span style="width:10.5px"> </span><span class="s" style="width:10.5px">(</span><span class="d" style="width:43.5px">char</span><span class="s" style="width:10.5px">)</span><span style="width:10.5px"> </span><span class="s" style="width:10.5px">(</span><span style="width:33px">sb4</span><span style="width:10.5px">.</span><span style="width:66px">charAt</span><span class="s" style="width:10.5px">(</span><span class="n" style="width:10.5px">1</span><span class="s" style="width:10.5px">)</span><span style="width:10.5px"> </span><span class="o" style="width:10.5px">-</span><span style="width:10.5px"> </span><span class="q" style="width:43.5px">&#x27;\n&#x27;</span><span class="s" style="width:10.5px">)</span><span class="s" style="width:10.5px">)</span><span style="width:10.5px">;</span></div><div class="abs ln mono" style="top:747px;color:#5a00b4">36</div><div class="abs cl mono" style="top:746px"><span style="width:88.5px">        </span><span style="width:33px">sb4</span><span style="width:10.5px">.</span><span style="width:99px">setCharAt</span><span class="s" style="width:10.5px">(</span><span class="n" style="width:10.5px">2</span><span style="width:10.5px">,</span><span style="width:10.5px"> </span><span class="s" style="width:10.5px">(</span><span class="d" style="width:43.5px">char</span><span class="s" style="width:10.5px">)</span><span style="width:10.5px"> </span><span class="s" style="width:10.5px">(</span><span style="width:33px">sb4</span><span style="width:10.5px">.</span><span style="width:66px">charAt</span><span class="s" style="width:10.5px">(</span><span class="n" style="width:10.5px">2</span><span class="s" style="width:10.5px">)</span><span style="width:10.5px"> </span><span class="o" style="width:10.5px">+</span><span style="width:10.5px"> </span><span class="n" style="width:10.5px">1</span><span class="s" style="width:10.5px">)</span><span class="s" style="width:10.5px">)</span><span style="width:10.5px">;</span></div><div class="abs ln mono" style="top:771px;color:#5a00b4">37</div><div class="abs cl mono" style="top:770px"><span style="width:88.5px">        </span><span style="width:33px">sb4</span><span style="width:10.5px">.</span><span style="width:99px">setCharAt</span><span class="s" style="width:10.5px">(</span><span class="n" style="width:10.5px">3</span><span style="width:10.5px">,</span><span style="width:10.5px"> </span><span class="s" style="width:10.5px">(</span><span class="d" style="width:43.5px">char</span><span class="s" style="width:10.5px">)</span><span style="width:10.5px"> </span><span class="s" style="width:10.5px">(</span><span style="width:33px">sb4</span><span style="width:10.5px">.</span><span style="width:66px">charAt</span><span class="s" style="width:10.5px">(</span><span class="n" style="width:10.5px">3</span><span class="s" style="width:10.5px">)</span><span style="width:10.5px"> </span><span class="o" style="width:10.5px">+</span><span style="width:10.5px"> </span><span class="n" style="width:22.5px">14</span><span class="s" style="width:10.5px">)</span><span class="s" style="width:10.5px">)</span><span style="width:10.5px">;</span></div><div class="abs cl mono" style="top:794px"><span style="width:88.5px">        </span><span class="k" style="width:66px">return</span><span style="width:10.5px"> </span><span style="width:33px">str</span><span style="width:10.5px">.</span><span style="width:66px">equals</span><span class="s" style="width:10.5px">(</span><span style="width:121.5px">BuildConfig</span><span style="width:10.5px">.</span><span style="width:66px">FLAVOR</span><span style="width:10.5px">.</span><span style="width:66px">concat</span><span class="s" style="width:10.5px">(</span><span style="width:33px">sb3</span><span style="width:10.5px">.</span><span style="width:88.5px">toString</span><span class="s" style="width:10.5px">(</span><span class="s" style="width:10.5px">)</span><span class="s" style="width:10.5px">)</span><span style="width:10.5px">.</span><span style="width:66px">concat</span><span class="s" style="width:10.5px">(</span><span style="width:33px">sb2</span><span style="width:10.5px">.</span><span style="width:88.5px">toString</span><span class="s" style="width:10.5px">(</span><span class="s" style="width:10.5px">)</span><span class="s" style="width:10.5px">)</span><span style="width:10.5px">.</span><span style="width:66px">concat</span><span class="s" style="width:10.5px">(</span><span style="width:22.5px">sb</span><span style="width:10.5px">.</span><span style="width:88.5px">toString</span><span class="s" style="width:10.5px">(</span><span class="s" style="width:10.5px">)</span><span class="s" style="width:10.5px">)</span><span style="width:10.5px">.</span><span style="width:66px">concat</span><span class="s" style="width:10.5px">(</span><span style="width:33px">sb4</span><span style="width:10.5px">.</span><span style="width:88.5px">toString</span><span class="s" style="width:10.5px">(</span><span class="s" style="width:10.5px">)</span><span class="s" style="width:10.5px">)</span><span class="s" style="width:10.5px">)</span><span style="width:10.5px">;</span></div><div class="abs cl mono" style="top:818px"><span style="width:43.5px">    </span><span class="s" style="width:10.5px">}</span></div><div class="abs cl mono" style="top:842px"><span class="s" style="width:10.5px">}</span></div></div>
<div class="abs" style="left:351px;top:1035px;width:1419px;height:14.6px;background:#f5f5f5"></div>
<div class="abs" style="left:388px;top:1035px;width:816px;height:14.6px;background:#dcdcdc"></div>
<div class="abs" style="left:349.2px;top:1049.5px;width:1421.8px;height:1.6px;background:#89b0d4"></div>
<div class="abs" style="left:1769.7px;top:138px;width:1.2px;height:913px;background:#89b0d4"></div>
<div class="abs" style="left:349.6px;top:1052.1px;width:1421px;height:1.3px;background:#cbcbcb"></div>
<div class="abs" style="left:349.3px;top:1051.9px;width:72px;height:4.1px;background:#4083c9"></div>
<div class="abs btab" style="left:367.5px;font-family:'Noto Sans CJK SC',sans-serif;font-size:18px;font-weight:300;letter-spacing:0">代码</div>
<div class="abs btab" style="left:440px">Smali</div>
<div class="abs btab" style="left:522px">Simple</div>
<div class="abs btab" style="left:617px">Fallback</div>
<div class="abs" style="left:785.5px;top:1066px;width:19.5px;height:19.5px;border:1.4px solid #b0b0b0;border-radius:4px;background:#fff"></div>
<div class="abs btab" style="left:812px;top:1063px">Split view</div>
<div class="abs" style="left:877.6999999999999px;top:1102.25px;width:4.4px;height:4.4px;border-radius:3px;background:#b5b5b5"></div>
<div class="abs" style="left:884.9px;top:1102.25px;width:4.4px;height:4.4px;border-radius:3px;background:#b5b5b5"></div>
<div class="abs" style="left:892.5999999999999px;top:1102.25px;width:4.4px;height:4.4px;border-radius:3px;background:#b5b5b5"></div>
</body></html>
